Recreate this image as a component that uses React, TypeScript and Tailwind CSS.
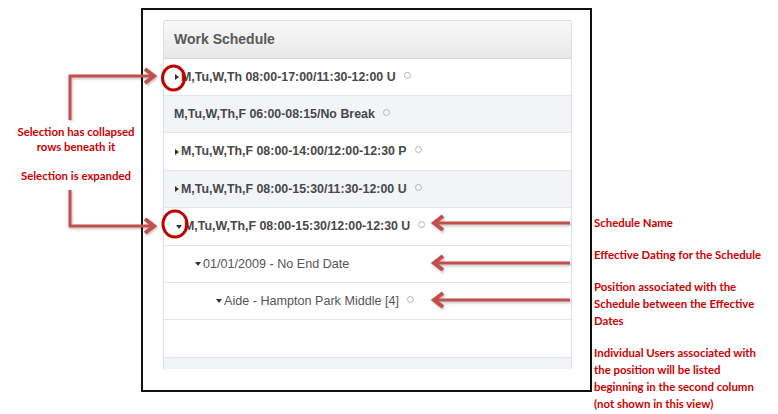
import React from "react";

const Right = () => (
  <span className="inline-block w-0 h-0 border-y-[3.5px] border-y-transparent border-l-[4px] border-l-[#333] mr-[2px]" />
);
const Down = () => (
  <span className="inline-block w-0 h-0 border-x-[3.5px] border-x-transparent border-t-[4px] border-t-[#333] mr-[2px]" />
);
const Dot = () => (
  <span className="inline-block w-[7px] h-[7px] rounded-full border-[1.5px] border-[#b4b4b4] ml-[8px] -translate-y-[2px]" />
);

type Row = { h: string; bg: string; pl: string; icon?: "r" | "d"; text: string; bold: boolean; dot: boolean };

const rows: Row[] = [
  { h: "h-[37px]", bg: "bg-white", pl: "pl-[11px]", icon: "r", text: "M,Tu,W,Th 08:00-17:00/11:30-12:00 U", bold: true, dot: true },
  { h: "h-[37px]", bg: "bg-[#f3f4f8]", pl: "pl-[10px]", text: "M,Tu,W,Th,F 06:00-08:15/No Break", bold: true, dot: true },
  { h: "h-[38px]", bg: "bg-white", pl: "pl-[11px]", icon: "r", text: "M,Tu,W,Th,F 08:00-14:00/12:00-12:30 P", bold: true, dot: true },
  { h: "h-[37px]", bg: "bg-[#f3f4f8]", pl: "pl-[11px]", icon: "r", text: "M,Tu,W,Th,F 08:00-15:30/11:30-12:00 U", bold: true, dot: true },
  { h: "h-[38px]", bg: "bg-white", pl: "pl-[12px]", icon: "d", text: "M,Tu,W,Th,F 08:00-15:30/12:00-12:30 U", bold: true, dot: true },
  { h: "h-[37px]", bg: "bg-white", pl: "pl-[31px]", icon: "d", text: "01/01/2009 - No End Date", bold: false, dot: false },
  { h: "h-[37px]", bg: "bg-white", pl: "pl-[52px]", icon: "d", text: "Aide - Hampton Park Middle [4]", bold: false, dot: true },
];

export default function App() {
  const red = "#c0504d";
  return (
    <div className="relative w-[778px] h-[414px] bg-white overflow-hidden font-['Liberation_Sans',Arial,sans-serif]">
      <div className="ml-[141px] mt-[8px] w-[451px] h-[384px] border-2 border-[#111] pt-[10px] pl-[20px]">
        <div className="w-[409px] border-l border-r border-t border-[#dcdee5] rounded-t-[2px]">
          <div className="h-[38px] bg-gradient-to-b from-[#f9f9f9] to-[#e8e8e8] border-b border-[#d6d6d6] flex items-center pl-[10px] text-[14px] font-bold text-[#595959]">
            Work Schedule
          </div>
          {rows.map((r, i) => (
            <div key={i} className={`${r.h} ${r.bg} ${r.pl} border-b border-[#e3e5eb] flex items-center text-[12.4px] ${r.bold ? "font-bold text-[#484848]" : "text-[#555]"}`}>
              {r.icon === "r" && <Right />}
              {r.icon === "d" && <Down />}
              <span className={r.bold ? "" : "text-[12.6px]"}>{r.text}</span>
              {r.dot && <Dot />}
            </div>
          ))}
          <div className="h-[38px] bg-white border-b border-[#e3e5eb]" />
          <div className="h-[11px] bg-[#f2f3f7]" />
        </div>
      </div>

      <svg className="absolute left-0 top-0" width="778" height="414" viewBox="0 0 778 414">
        <defs>
          <filter id="sh" x="-10%" y="-50%" width="120%" height="200%">
            <feDropShadow dx="1" dy="1.5" stdDeviation="0.8" floodColor="#000" floodOpacity="0.25" />
          </filter>
        </defs>
        <g stroke={red} strokeWidth="3" fill="none" strokeLinecap="butt" strokeLinejoin="miter" filter="url(#sh)">
          <polyline points="70,120 70,76 153,76" />
          <polyline points="145,69 154,76 145,83" strokeWidth="4" />
          <polyline points="70,190 70,226 153,226" />
          <polyline points="145,219 154,226 145,233" strokeWidth="4" />
          <line x1="434" y1="223" x2="570" y2="223" />
          <polyline points="443,216 434,223 443,230" strokeWidth="4" />
          <line x1="434" y1="263" x2="570" y2="263" />
          <polyline points="443,256 434,263 443,270" strokeWidth="4" />
          <line x1="434" y1="300" x2="570" y2="300" />
          <polyline points="443,293 434,300 443,307" strokeWidth="4" />
        </g>
        <g stroke="#c00000" strokeWidth="3" fill="none">
          <ellipse cx="173.5" cy="78" rx="11" ry="12" />
          <ellipse cx="175" cy="224" rx="12" ry="13" />
        </g>
      </svg>

      <div className="absolute left-[8px] top-[125px] w-[136px] flex flex-col items-center gap-[15px] text-[11.4px] font-bold text-[#cc0000] leading-[14.6px] font-['Lato',sans-serif]">
        <div className="text-center">Selection has collapsed<br />rows beneath it</div>
        <div className="text-center">Selection is expanded</div>
      </div>

      <div className="absolute left-[594px] top-[214px] w-[184px] flex flex-col gap-[15px] text-[11.4px] font-bold text-[#cc0000] leading-[17px] font-['Lato',sans-serif]">
        <div>Schedule Name</div>
        <div>Effective Dating for the Schedule</div>
        <div>Position associated with the<br />Schedule between the Effective<br />Dates</div>
        <div>Individual Users associated with<br />the position will be listed<br />beginning in the second column<br />(not shown in this view)</div>
      </div>
    </div>
  );
}
